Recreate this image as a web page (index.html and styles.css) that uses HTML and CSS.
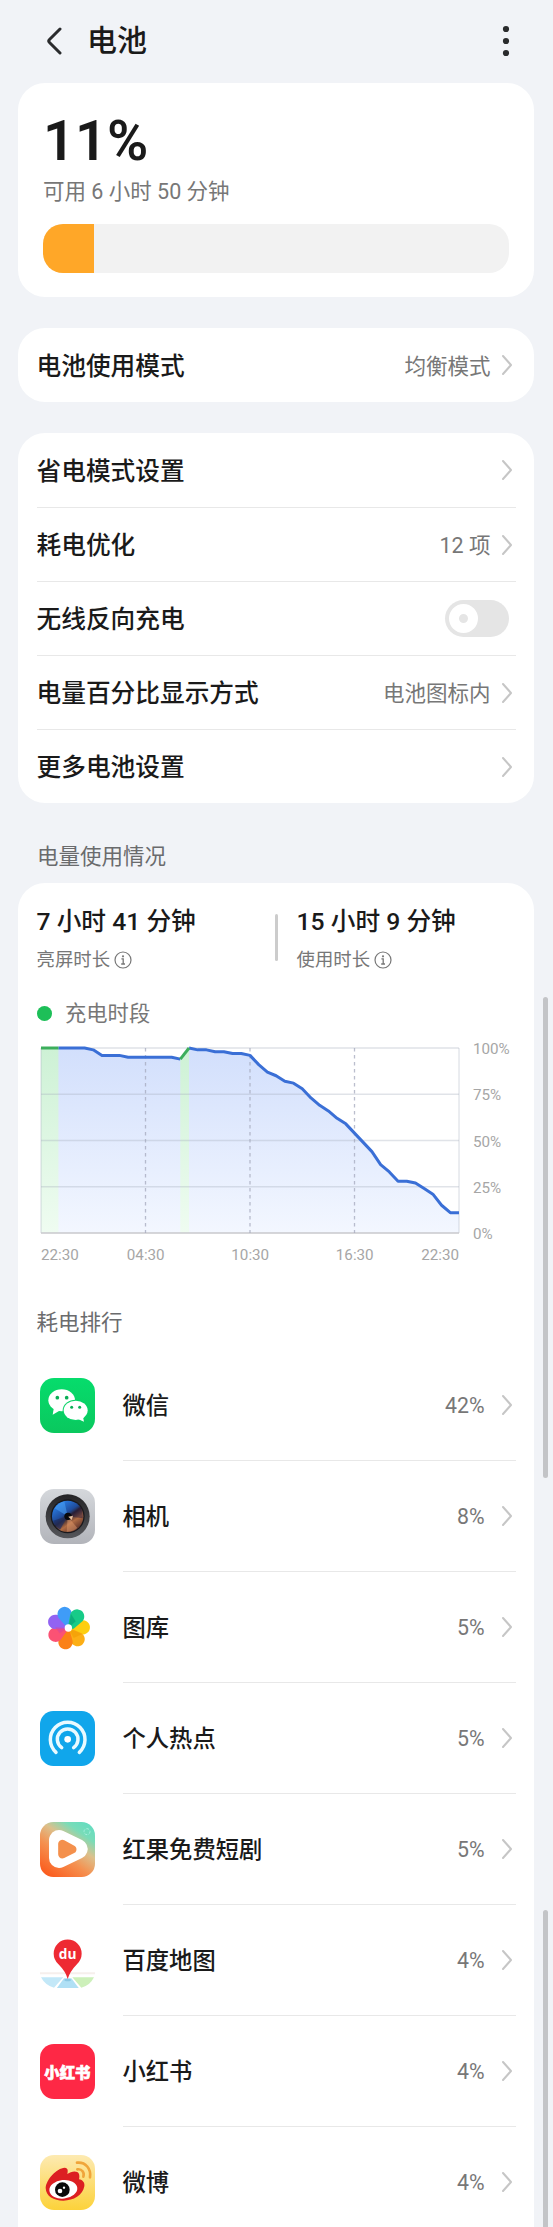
FILE: index.html
```
<!DOCTYPE html>
<html lang="zh-CN">
<head>
    <meta charset="UTF-8">
    <meta name="viewport" content="width=device-width, initial-scale=1.0">
    <title>电池</title>
    <link rel="stylesheet" href="styles.css">
</head>
<body>

<!-- shared chevron -->
<svg class="defs" width="0" height="0">
    <symbol id="chevron" viewBox="0 0 10 20">
        <path d="M1 1 L9 10 L1 19" fill="none" stroke="#c6c6c6" stroke-width="2" stroke-linecap="round" stroke-linejoin="round"/>
    </symbol>
    <symbol id="info" viewBox="0 0 18 18">
        <circle cx="9" cy="9" r="8" fill="none" stroke="#777" stroke-width="1.2"/>
        <circle cx="9" cy="5.3" r="1.1" fill="#777"/>
        <path d="M7.4 7.8 H9.2 V13 M7.2 13 H11" fill="none" stroke="#777" stroke-width="1.3"/>
    </symbol>
</svg>

<div class="screen">
    <header class="header">
        <svg class="back" viewBox="0 0 16 28"><path d="M14 2 L3.5 12.5 Q2 14 3.5 15.5 L14 26" fill="none" stroke="#2a2b2d" stroke-width="3" stroke-linecap="round"/></svg>
        <h1>电池</h1>
        <svg class="menu" viewBox="0 0 8 32">
            <circle cx="4" cy="4" r="3.1"/><circle cx="4" cy="16" r="3.1"/><circle cx="4" cy="28" r="3.1"/>
        </svg>
    </header>

    <section class="card level">
        <div class="percent">11%</div>
        <div class="remaining">可用 6 小时 50 分钟</div>
        <div class="bar"><div class="bar-fill" style="width: 11%"></div></div>
    </section>

    <section class="card list">
        <div class="row"><span class="label">电池使用模式</span><span class="value">均衡模式</span><svg class="chevron"><use href="#chevron"/></svg></div>
    </section>

    <section class="card list">
        <div class="row"><span class="label">省电模式设置</span><svg class="chevron"><use href="#chevron"/></svg></div>
        <div class="row"><span class="label">耗电优化</span><span class="value">12 项</span><svg class="chevron"><use href="#chevron"/></svg></div>
        <div class="row"><span class="label">无线反向充电</span><span class="toggle"><span class="knob"></span></span></div>
        <div class="row"><span class="label">电量百分比显示方式</span><span class="value">电池图标内</span><svg class="chevron"><use href="#chevron"/></svg></div>
        <div class="row"><span class="label">更多电池设置</span><svg class="chevron"><use href="#chevron"/></svg></div>
    </section>

    <h2 class="section-title">电量使用情况</h2>

    <section class="card usage">
        <div class="stats">
            <div class="stat">
                <div class="stat-value">7 小时 41 分钟</div>
                <div class="stat-label">亮屏时长<svg class="info"><use href="#info"/></svg></div>
            </div>
            <div class="stat-line"></div>
            <div class="stat">
                <div class="stat-value">15 小时 9 分钟</div>
                <div class="stat-label">使用时长<svg class="info"><use href="#info"/></svg></div>
            </div>
        </div>

        <div class="legend"><span class="dot"></span>充电时段</div>

        <div class="chart">
            <!-- x: half hours, y: 100 - battery level -->
            <svg class="plot" viewBox="0 0 48 100" preserveAspectRatio="none">
                <defs>
                    <linearGradient id="blueFill" x1="0" y1="0" x2="0" y2="1">
                        <stop offset="0" stop-color="#d2dffc"/><stop offset="1" stop-color="#f3f7ff"/>
                    </linearGradient>
                    <linearGradient id="greenFill" x1="0" y1="0" x2="0" y2="1">
                        <stop offset="0" stop-color="#cdf1d5"/><stop offset="1" stop-color="#effcf1"/>
                    </linearGradient>
                </defs>
                <path fill="url(#blueFill)" d="M0 0 L5 0 6 1 7 4 9 4 10 5 15 5 16 6 17 0 18 1 19 1 20 2 21 2 22 3 23 3 24 4 25 9 26 13 27 15 28 18 29 19 30 22 31 27 32 31 33 34 34 38 35 41 36 46 37 51 38 56 39 63 40 67 41 72 42 72 43 73 44 76 45 79 46 85 47 89 48 89 V100 H0 Z"/>
                <rect x="0" y="0" width="2" height="100" fill="url(#greenFill)"/>
                <path fill="url(#greenFill)" d="M16 6 L17 0 V100 H16 Z"/>
                <g class="grid">
                    <path d="M0 0 H48 M0 25 H48 M0 50 H48 M0 75 H48"/>
                    <path d="M0 0 V100 M48 0 V100"/>
                    <path class="base" d="M0 100 H48"/>
                    <path class="dashed" d="M12 0 V100 M24 0 V100 M36 0 V100"/>
                </g>
                <polyline class="line" points="2,0 5,0 6,1 7,4 9,4 10,5 15,5 16,6"/>
                <polyline class="line" points="17,0 18,1 19,1 20,2 21,2 22,3 23,3 24,4 25,9 26,13 27,15 28,18 29,19 30,22 31,27 32,31 33,34 34,38 35,41 36,46 37,51 38,56 39,63 40,67 41,72 42,72 43,73 44,76 45,79 46,85 47,89 48,89"/>
                <polyline class="line charging" points="0,0 2,0"/>
                <polyline class="line charging" points="16,6 17,0"/>
            </svg>
            <div class="y-axis"><span>100%</span><span>75%</span><span>50%</span><span>25%</span><span>0%</span></div>
            <div class="x-axis"><span>22:30</span><span>04:30</span><span>10:30</span><span>16:30</span><span>22:30</span></div>
        </div>

        <h2 class="rank-title">耗电排行</h2>

        <div class="apps">
            <div class="app">
                <svg class="icon" viewBox="0 0 165 165">
                    <defs><linearGradient id="wx" x1="0" y1="0" x2="0" y2="1"><stop offset="0" stop-color="#06dc6c"/><stop offset="1" stop-color="#0ac85e"/></linearGradient></defs>
                    <rect width="165" height="165" rx="42" fill="url(#wx)"/>
                    <path d="M42 88 L38 110 L62 96 Z" fill="#fff"/>
                    <ellipse cx="65" cy="67" rx="40" ry="33" fill="#fff"/>
                    <ellipse cx="107" cy="97" rx="39" ry="32" fill="#08d266"/>
                    <path d="M112 122 L132 131 L128 112 Z" fill="#fff"/>
                    <ellipse cx="107" cy="97" rx="36" ry="29" fill="#fff"/>
                    <g fill="#0aae55"><circle cx="52" cy="59" r="5.5"/><circle cx="80" cy="59" r="5.5"/><circle cx="95" cy="88" r="4.5"/><circle cx="119" cy="88" r="4.5"/></g>
                </svg>
                <div class="app-body"><span class="name">微信</span><span class="share">42%</span><svg class="chevron"><use href="#chevron"/></svg></div>
            </div>
            <div class="app">
                <svg class="icon" viewBox="0 0 165 165">
                    <defs>
                        <linearGradient id="cam" x1="0" y1="0" x2="0" y2="1"><stop offset="0" stop-color="#d5d8dc"/><stop offset="1" stop-color="#b2b4ba"/></linearGradient>
                        <linearGradient id="ring" x1="0" y1="0" x2="0" y2="1"><stop offset="0" stop-color="#242426"/><stop offset="1" stop-color="#55565a"/></linearGradient>
                        <linearGradient id="lens" x1=".2" y1=".1" x2=".75" y2=".9"><stop offset="0" stop-color="#2a7ee6"/><stop offset=".4" stop-color="#1f4c9c"/><stop offset=".54" stop-color="#2c2230"/><stop offset=".75" stop-color="#b06c44"/><stop offset="1" stop-color="#6c3c2e"/></linearGradient>
                    </defs>
                    <rect width="165" height="165" rx="42" fill="url(#cam)"/>
                    <circle cx="83" cy="82" r="66" fill="url(#ring)"/>
                    <circle cx="83" cy="82" r="51" fill="#19191d"/>
                    <circle cx="83" cy="82" r="47" fill="url(#lens)"/>
                    <path d="M83 82 L44 58 A46 46 0 0 1 73 37 Z" fill="#4aa3f5" opacity=".55"/>
                    <path d="M83 82 L120 54 A46 46 0 0 1 128 88 Z" fill="#2a1c3c" opacity=".5"/>
                    <path d="M83 82 L112 117 A46 46 0 0 1 80 128 Z" fill="#e09a6c" opacity=".5"/>
                    <path d="M83 82 L39 95 A46 46 0 0 0 60 122 Z" fill="#202d60" opacity=".7"/>
                    <circle cx="84" cy="82" r="11" fill="#08080c"/>
                    <path d="M85 83 L99 80 L95 93 Z" fill="#e8c0a0"/>
                </svg>
                <div class="app-body"><span class="name">相机</span><span class="share">8%</span><svg class="chevron"><use href="#chevron"/></svg></div>
            </div>
            <div class="app">
                <svg class="icon" viewBox="0 0 165 165">
                    <defs><path id="petal" d="M0 4 L-20 -36 A21.5 21.5 0 1 1 21 -38 L14 -8 Z"/></defs>
                    <g transform="translate(85 84)">
                        <use href="#petal" transform="rotate(87)" fill="#fdce10"/>
                        <use href="#petal" transform="rotate(140)" fill="#fcae15"/>
                        <use href="#petal" transform="rotate(191)" fill="#fb8116"/>
                        <use href="#petal" transform="rotate(242)" fill="#fb5274"/>
                        <use href="#petal" transform="rotate(295)" fill="#9263f2"/>
                        <use href="#petal" transform="rotate(345)" fill="#3f9cf8"/>
                        <use href="#petal" transform="rotate(37)" fill="#17cb88"/>
                        <path d="M0 0 L8 -42 L22 -20 Z" fill="#0aa879" opacity=".8"/>
                        <path d="M0 0 L42 18 L16 30 Z" fill="#f3a008" opacity=".8"/>
                        <path d="M0 0 L-40 -2 L-26 16 Z" fill="#d9469c" opacity=".6"/>
                        <circle r="11" fill="#fff"/>
                    </g>
                </svg>
                <div class="app-body"><span class="name">图库</span><span class="share">5%</span><svg class="chevron"><use href="#chevron"/></svg></div>
            </div>
            <div class="app">
                <svg class="icon" viewBox="0 0 165 165">
                    <rect width="165" height="165" rx="40" fill="#10a6eb"/>
                    <circle cx="83" cy="85" r="10" fill="#fff"/>
                    <g fill="none" stroke="#e9faff" stroke-width="10.5" stroke-linecap="round">
                        <path d="M65 110 A31 31 0 1 1 101 110"/>
                        <path d="M48 124 A52 52 0 1 1 118 124"/>
                    </g>
                </svg>
                <div class="app-body"><span class="name">个人热点</span><span class="share">5%</span><svg class="chevron"><use href="#chevron"/></svg></div>
            </div>
            <div class="app">
                <svg class="icon" viewBox="0 0 165 165">
                    <defs><linearGradient id="hg" x1=".15" y1="1" x2=".85" y2="0"><stop offset="0" stop-color="#fb5a1c"/><stop offset=".38" stop-color="#f5904f"/><stop offset=".62" stop-color="#dcc08c"/><stop offset=".82" stop-color="#79dcb8"/><stop offset="1" stop-color="#64dcc0"/></linearGradient></defs>
                    <rect width="165" height="165" rx="40" fill="url(#hg)"/>
                    <circle cx="141" cy="29" r="9" fill="none" stroke="#a6efdc" stroke-width="3" stroke-dasharray="9 4"/>
                    <path d="M57 54 L57 108 L113 81 Z" fill="#fff" stroke="#fff" stroke-width="60" stroke-linejoin="round"/>
                    <path d="M67 66 L67 97 L97 82 Z" fill="#f4904c" stroke="#f4904c" stroke-width="25" stroke-linejoin="round"/>
                </svg>
                <div class="app-body"><span class="name">红果免费短剧</span><span class="share">5%</span><svg class="chevron"><use href="#chevron"/></svg></div>
            </div>
            <div class="app">
                <svg class="icon" viewBox="0 0 165 165">
                    <path d="M0 118 H165 V124 H0 Z" fill="#f6efec"/>
                    <path d="M3 133 H70 L42 164 Q16 158 3 133 Z" fill="#c3e8f8"/>
                    <path d="M162 133 H97 L124 164 Q150 158 162 133 Z" fill="#cdf0ba"/>
                    <path d="M72 136 H94 L117 166 H50 Z" fill="#b0e0f5"/>
                    <ellipse cx="83" cy="141" rx="10" ry="4" fill="#8cc8e4"/>
                    <path d="M83 138 Q78 116 54 92 A42 42 0 1 1 112 92 Q89 116 83 138 Z" fill="#ee2a33"/>
                    <text x="83" y="77" class="du" text-anchor="middle">du</text>
                </svg>
                <div class="app-body"><span class="name">百度地图</span><span class="share">4%</span><svg class="chevron"><use href="#chevron"/></svg></div>
            </div>
            <div class="app">
                <svg class="icon" viewBox="0 0 165 165">
                    <rect width="165" height="165" rx="42" fill="#fe2845"/>
                    <text x="82" y="101" class="xhs" text-anchor="middle">小红书</text>
                </svg>
                <div class="app-body"><span class="name">小红书</span><span class="share">4%</span><svg class="chevron"><use href="#chevron"/></svg></div>
            </div>
            <div class="app">
                <svg class="icon" viewBox="0 0 165 165">
                    <defs><linearGradient id="wb" x1="0" y1="0" x2="0" y2="1"><stop offset="0" stop-color="#fdeab2"/><stop offset="1" stop-color="#fcd23a"/></linearGradient></defs>
                    <rect width="165" height="165" rx="42" fill="url(#wb)"/>
                    <path d="M17 99 C18 74 50 39 74 38 C85 39 84 48 82 57 C94 49 112 46 117 57 C119 64 118 69 117 73 C128 75 135 83 133 94 C128 121 101 137 70 137 C41 137 18 124 17 99 Z" fill="#dc1f22"/>
                    <ellipse cx="70" cy="103" rx="42" ry="28" fill="#fff" transform="rotate(-6 70 103)"/>
                    <circle cx="67" cy="104" r="22" fill="#0a0a0a"/>
                    <circle cx="60" cy="108" r="7" fill="#fff"/>
                    <circle cx="72" cy="98" r="3.5" fill="#fff"/>
                    <g fill="none" stroke="#f0a53a" stroke-width="8" stroke-linecap="round">
                        <path d="M111 23 C137 20 154 42 150 67"/>
                        <path d="M112 43 C126 41 134 53 130 65"/>
                    </g>
                </svg>
                <div class="app-body"><span class="name">微博</span><span class="share">4%</span><svg class="chevron"><use href="#chevron"/></svg></div>
            </div>
        </div>
    </section>

    <div class="scrollbar first"></div>
    <div class="scrollbar second"></div>
</div>

</body>
</html>
```
FILE: styles.css
```
* {
    box-sizing: border-box;
}
body {
    margin: 0;
    background: #f1f3f7;
    color: #1a1a1a;
    font-family: Roboto, "Noto Sans CJK SC", sans-serif;
}
h1, h2 {
    margin: 0;
}
.defs {
    position: absolute;
}
.screen {
    position: relative;
    height: 2227px;
    padding: 0 19px 0 18px;
    overflow: hidden;
}
.header {
    display: flex;
    align-items: center;
    height: 83px;
    padding: 0 24px 2px 28px;
}
.header h1 {
    flex: 1;
    margin-left: 25px;
    padding-top: 1px;
    font-size: 30px;
    font-weight: 500;
    line-height: 40px;
}
.back {
    width: 16px;
    height: 28px;
}
.menu {
    width: 8px;
    height: 32px;
    fill: #2a2b2d;
}
.card {
    margin-bottom: 31px;
    border-radius: 27px;
    background: #fff;
}

/* battery level */
.level {
    height: 214px;
    padding: 24px 25px 0;
}
.percent {
    height: 70px;
    font-size: 56px;
    font-weight: 600;
    line-height: 68px;
}
.remaining {
    height: 47px;
    color: #777;
    font-size: 21.5px;
    line-height: 29px;
}
.bar {
    height: 49px;
    border-radius: 20px;
    background: #f2f2f2;
    overflow: hidden;
}
.bar-fill {
    height: 100%;
    background: #ffa728;
}

/* settings rows */
.list {
    padding: 0 18.5px;
}
.row {
    display: flex;
    align-items: center;
    height: 74px;
    padding-right: 4px;
}
.row + .row {
    border-top: 1px solid #e8e8e8;
}
.label {
    flex: 1;
    padding-top: 3px;
    font-size: 24.7px;
    font-weight: 500;
    line-height: 36px;
}
.value {
    padding-top: 3px;
    color: #777;
    font-size: 21.5px;
    line-height: 32px;
}
.chevron {
    flex: none;
    width: 10px;
    height: 20px;
    margin-left: 11px;
}
.toggle {
    display: flex;
    align-items: center;
    width: 64px;
    height: 37px;
    margin-right: 3px;
    padding-left: 4px;
    border-radius: 19px;
    background: #e5e5e5;
}
.knob {
    width: 29px;
    height: 29px;
    border: 10px solid #fff;
    border-radius: 50%;
    background: #e5e5e5;
}

.section-title, .rank-title {
    color: #6a6b6d;
    font-size: 21.5px;
    font-weight: 400;
    line-height: 32px;
}
.section-title {
    height: 43px;
    margin-top: 37px;
    padding: 1px 0 0 19px;
}

/* usage */
.usage {
    height: 1400px;
    padding: 21px 18.5px 0;
}
.stats {
    display: flex;
    height: 91px;
}
.stat {
    flex: none;
    width: 238px;
}
.stat:last-child {
    width: auto;
}
.stat-value {
    font-size: 24.7px;
    font-weight: 500;
    line-height: 36px;
}
.stat-label {
    display: flex;
    align-items: center;
    margin-top: 6px;
    color: #777;
    font-size: 18.4px;
    line-height: 27px;
}
.info {
    width: 18px;
    height: 18px;
    margin-left: 4px;
}
.stat-line {
    width: 3px;
    height: 47px;
    margin: 10px 19px 0 0;
    border-radius: 2px;
    background: #ccc;
}
.legend {
    display: flex;
    align-items: center;
    gap: 13px;
    height: 37px;
    color: #777;
    font-size: 21.3px;
    line-height: 32px;
}
.dot {
    width: 15.5px;
    height: 15.5px;
    border-radius: 50%;
    background: #1dbf58;
}
.chart {
    display: grid;
    grid-template-columns: 418px 1fr;
    grid-template-rows: 185px 40px;
    column-gap: 14px;
    padding: 16px 0 0 4.5px;
    color: #a6a6a6;
    font-size: 15.2px;
    line-height: 18px;
}
.plot {
    width: 418px;
    height: 185px;
    overflow: visible;
}
.plot path, .plot polyline {
    vector-effect: non-scaling-stroke;
}
.grid path {
    fill: none;
    stroke: #a5afbd;
    stroke-opacity: .35;
    stroke-width: 1.3px;
}
.grid .base {
    stroke: #c8c9cc;
    stroke-opacity: 1;
}
.grid .dashed {
    stroke: #a4a8bc;
    stroke-opacity: .75;
    stroke-dasharray: 3.5 3.5;
}
.line {
    fill: none;
    stroke: #3a6fd6;
    stroke-width: 3px;
    stroke-linejoin: round;
}
.line.charging {
    stroke: #3cae5c;
}
.y-axis {
    display: flex;
    flex-direction: column;
    justify-content: space-between;
    margin: -8px 0 -10px;
}
.x-axis {
    display: grid;
    grid-template-columns: 52.5px 104.5px 104.5px 104.5px 52px;
    padding-top: 13px;
    text-align: center;
}
.x-axis span:first-child {
    text-align: left;
}
.x-axis span:last-child {
    justify-self: end;
}
.rank-title {
    margin-top: 34px;
}

/* app ranking */
.apps {
    margin-top: 11px;
}
.app {
    display: flex;
    align-items: center;
    height: 111px;
}
.icon {
    flex: none;
    width: 55px;
    height: 55px;
    margin: 0 28px 0 3px;
}
.app-body {
    display: flex;
    flex: 1;
    align-items: center;
    height: 111px;
    padding-right: 4px;
    border-bottom: 1px solid #e8e8e8;
}
.name {
    flex: 1;
    padding-top: 2px;
    font-size: 23.3px;
    font-weight: 500;
    line-height: 34px;
}
.share {
    margin-right: 6px;
    padding-top: 1px;
    color: #777;
    font-size: 21.3px;
}
.du {
    fill: #fff;
    font: 700 41px "Open Sans", sans-serif;
}
.xhs {
    fill: #fff;
    stroke: #fff;
    stroke-width: 2px;
    font: 900 46px "Noto Sans CJK SC", sans-serif;
}

.scrollbar {
    position: absolute;
    right: 5.5px;
    width: 4.5px;
    border-radius: 3px;
    background: #c3c4c7;
}
.scrollbar.first {
    top: 997px;
    height: 481px;
}
.scrollbar.second {
    top: 1910px;
    height: 330px;
}
```
